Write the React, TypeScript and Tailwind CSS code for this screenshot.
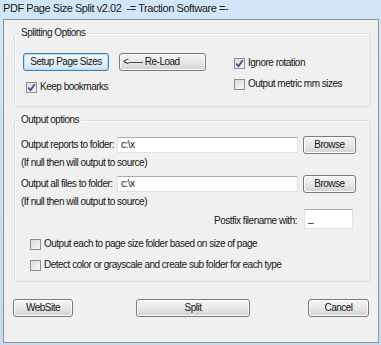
import React from "react";

function Btn({ label, w, primary, left }: { label: string; w: string; primary?: boolean; left?: boolean }) {
  return (
    <button
      className={`${w} h-[18px] rounded-[3px] border flex items-center ${left ? "justify-start pl-[3px]" : "justify-center"} ${
        primary
          ? "border-[#3c7fb1] bg-linear-to-b from-[#f5fafe] via-[#e6f1f9] to-[#cfe3f1] shadow-[inset_0_0_0_1px_#b6def6]"
          : "border-[#7a7a7a] bg-linear-to-b from-[#f4f4f4] via-[#e8e8e8] to-[#d2d2d2] shadow-[inset_0_0_0_1px_#fbfbfb]"
      }`}
    >
      {label}
    </button>
  );
}

function Check({ label, on }: { label: string; on?: boolean }) {
  return (
    <div className="flex items-center gap-[3px] h-[12px]">
      <div className="w-[11px] h-[11px] border border-[#8f8f8f] bg-linear-to-br from-[#dcdcdc] to-[#f6f6f6] flex items-center justify-center">
        {on && (
          <svg width="9" height="9" viewBox="0 0 9 9">
            <path d="M1.2 4.6 L3.5 7.2 L7.8 1.2" fill="none" stroke="#2b4a8b" strokeWidth="1.7" />
          </svg>
        )}
      </div>
      <span>{label}</span>
    </div>
  );
}

function Field({ value, w, h }: { value: string; w: string; h: string }) {
  return (
    <div className={`${w} ${h} bg-white border border-[#dfe3e8] border-t-[#abadb3] flex items-center pl-[3px]`}>
      {value}
    </div>
  );
}

export default function App() {
  return (
    <div className="w-[381px] h-[345px] bg-linear-to-b from-[#d3e5f8] to-[#c6dbf0] font-['Liberation_Sans',Arial,sans-serif] text-[10px] leading-[12px] tracking-[-0.5px] text-[#161616]">
      <div className="h-[19px] pl-[3px] pt-[2px] text-[11px] leading-[13px] tracking-[-0.45px] text-[#1b1b1b] whitespace-pre">
        PDF Page Size Split v2.02  -= Traction Software =-
      </div>
      <div className="ml-[3px] w-[376px] h-[324px] border border-[#8b939b] bg-[#f0f0f0] flex flex-col">
        <fieldset className="mt-[7px] ml-[10px] w-[357px] h-[80px] border border-[#d5dfe5] rounded-[3px] shadow-[inset_1px_1px_0_#ffffff]">
          <legend className="ml-[4px] px-[2px]">Splitting Options</legend>
          <div className="flex pl-[8px] pt-[14px]">
            <div className="flex flex-col">
              <div className="flex gap-[10px]">
                <Btn label="Setup Page Sizes" w="w-[86px]" primary />
                <Btn label="<----- Re-Load" w="w-[87px]" left />
              </div>
              <div className="mt-[10px] ml-[3px]">
                <Check label="Keep bookmarks" on />
              </div>
            </div>
            <div className="ml-[28px] pt-[4px] flex flex-col gap-[9px]">
              <Check label="Ignore rotation" on />
              <Check label="Output metric mm sizes" />
            </div>
          </div>
        </fieldset>

        <fieldset className="mt-[7px] ml-[10px] w-[357px] h-[168px] border border-[#d5dfe5] rounded-[3px] shadow-[inset_1px_1px_0_#ffffff]">
          <legend className="ml-[4px] px-[2px]">Output options</legend>
          <div className="flex flex-col pl-[6px] pt-[10px]">
            <div className="flex items-center h-[18px]">
              <span className="w-[96px]">Output reports to folder:</span>
              <Field value="c:\x" w="w-[181px]" h="h-[16px]" />
              <div className="ml-[5px]">
                <Btn label="Browse" w="w-[53px]" />
              </div>
            </div>
            <div className="mt-[3px]">(If null then will output to source)</div>
            <div className="flex items-center h-[18px] mt-[6px]">
              <span className="w-[96px]">Output all files to folder:</span>
              <Field value="c:\x" w="w-[181px]" h="h-[16px]" />
              <div className="ml-[5px]">
                <Btn label="Browse" w="w-[53px]" />
              </div>
            </div>
            <div className="mt-[3px]">(If null then will output to source)</div>
            <div className="flex items-center justify-end h-[20px] mt-[1px] pr-[17px]">
              <span className="mr-[7px] mt-[4px]">Postfix filename with:</span>
              <Field value="_" w="w-[49px]" h="h-[20px]" />
            </div>
            <div className="mt-[9px] ml-[9px] flex flex-col gap-[9px]">
              <Check label="Output each to page size folder based on size of page" />
              <Check label="Detect color or grayscale and create sub folder for each type" />
            </div>
          </div>
        </fieldset>

        <div className="flex mt-[17px]">
          <div className="ml-[9px]">
            <Btn label="WebSite" w="w-[60px]" />
          </div>
          <div className="ml-[63px]">
            <Btn label="Split" w="w-[114px]" />
          </div>
          <div className="ml-[58px]">
            <Btn label="Cancel" w="w-[61px]" />
          </div>
        </div>
      </div>
    </div>
  );
}
